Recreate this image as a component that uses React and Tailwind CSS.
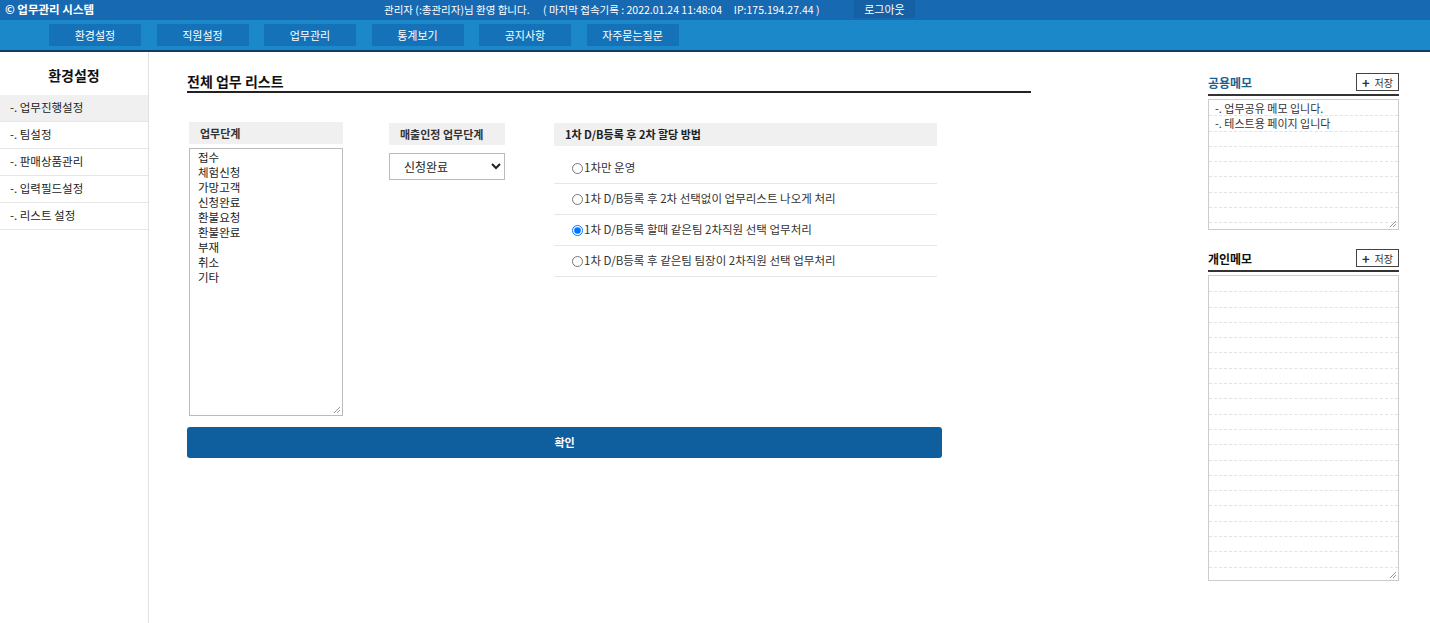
import React, { useState } from 'react';

const menus = ['환경설정', '직원설정', '업무관리', '통계보기', '공지사항', '자주묻는질문'];
const sideItems = ['-. 업무진행설정', '-. 팀설정', '-. 판매상품관리', '-. 입력필드설정', '-. 리스트 설정'];
const steps = ['접수', '체험신청', '가망고객', '신청완료', '환불요청', '환불완료', '부재', '취소', '기타'];
const methods = [
    '1차만 운영',
    '1차 D/B등록 후 2차 선택없이 업무리스트 나오게 처리',
    '1차 D/B등록 할때 같은팀 2차직원 선택 업무처리',
    '1차 D/B등록 후 같은팀 팀장이 2차직원 선택 업무처리',
];

const Memo = ({ title, color, lines = [], rows, height, className = '' }) => (
    <div className={className}>
        <div className="flex items-end justify-between border-b-2 border-[#333] pb-[2px]">
            <span className={`text-[12px] font-bold ${color}`}>{title}</span>
            <button className="flex items-center gap-[5px] border border-[#444] px-[5px] h-[18px] text-[10px] text-[#333] mb-[1px]">
                <span className="text-[13px] font-bold leading-none">+</span>저장
            </button>
        </div>
        <div className={`relative mt-[3px] border border-[#ccc] pt-[1px] overflow-hidden ${height}`}>
            {[...Array(rows)].map((_, i) => (
                <div key={i} className="h-[15.3px] border-b border-dashed border-[#e3e3e3] pl-[6px] text-[11px] leading-[15px] text-[#333]">
                    {lines[i] || ''}
                </div>
            ))}
            <svg className="absolute right-[1px] bottom-[1px]" width="8" height="8" viewBox="0 0 8 8">
                <path d="M7 1L1 7M7 4L4 7" stroke="#999" strokeWidth="1" />
            </svg>
        </div>
    </div>
);

export default function App() {
    const [method, setMethod] = useState(2);

    return (
        <div className="min-h-[623px] bg-white font-['Noto_Sans_CJK_KR','Noto_Sans',sans-serif] text-[#222]">
            {/* top bar */}
            <div className="flex items-center h-[20px] bg-[#1769b1] text-white text-[10.5px]">
                <span className="pl-[5px] w-[384px] font-bold text-[11.5px]">© 업무관리 시스템</span>
                <span className="w-[159px]">관리자 (:총관리자)님 환영 합니다.</span>
                <span className="w-[311px]">( 마지막 접속기록 : 2022.01.24 11:48:04 &nbsp;&nbsp;&nbsp; IP:175.194.27.44 )</span>
                <span className="flex items-center justify-center w-[61px] h-[18px] self-start bg-[#1660a6] text-[11px]">로그아웃</span>
            </div>
            {/* nav */}
            <div className="flex items-center gap-[15.5px] h-[32px] pl-[49px] bg-[#1b89c9] border-b-2 border-[#0f3d60]">
                {menus.map((m) => (
                    <div key={m} className="flex items-center justify-center w-[92px] h-[22px] bg-[#1572b8] text-white text-[11px]">
                        {m}
                    </div>
                ))}
            </div>

            <div className="flex">
                {/* sidebar */}
                <aside className="w-[149px] min-h-[571px] border-r border-[#e2e2e2]">
                    <div className="h-[43px] flex items-center justify-center pt-[3px] text-[14px] font-bold text-[#111]">환경설정</div>
                    {sideItems.map((s, i) => (
                        <div key={s} className={`h-[27px] flex items-center pl-[10px] text-[11.5px] border-b border-[#e6e6e6] ${i === 0 ? 'bg-[#f0f0f0]' : ''}`}>
                            {s}
                        </div>
                    ))}
                </aside>

                {/* main */}
                <main className="flex-1 pl-[38px] pt-[19px]">
                    <div className="w-[844px] border-b-2 border-[#222] text-[14px] leading-[20px] font-bold text-[#111]">전체 업무 리스트</div>

                    <div className="flex mt-[29px] pl-[2px]">
                        <div className="w-[154px]">
                            <div className="h-[22px] flex items-center pl-[11px] bg-[#f0f0f0] text-[11px] font-bold text-[#333]">업무단계</div>
                            <div className="relative mt-[4px] h-[268px] border border-[#bbb] pl-[8px] pt-[1px]">
                                {steps.map((s) => (
                                    <div key={s} className="text-[11.5px] leading-[15px] text-[#222]">{s}</div>
                                ))}
                                <svg className="absolute right-[1px] bottom-[1px]" width="8" height="8" viewBox="0 0 8 8">
                                    <path d="M7 1L1 7M7 4L4 7" stroke="#999" strokeWidth="1" />
                                </svg>
                            </div>
                        </div>

                        <div className="w-[116px] ml-[46px] mt-[1px]">
                            <div className="h-[22px] flex items-center pl-[11px] bg-[#f0f0f0] text-[11px] font-bold text-[#333]">매출인정 업무단계</div>
                            <select defaultValue="신청완료" className="mt-[8px] w-[116px] h-[27px] border border-[#bbb] pl-[10px] text-[12px] text-[#222] bg-white">
                                {steps.map((s) => <option key={s}>{s}</option>)}
                            </select>
                        </div>

                        <div className="w-[383px] ml-[49px] mt-[1px]">
                            <div className="h-[23px] flex items-center pl-[11px] bg-[#f0f0f0] text-[11px] font-bold text-[#222]">1차 D/B등록 후 2차 할당 방법</div>
                            <div className="mt-[7px]">
                                {methods.map((m, i) => (
                                    <label key={m} className="flex items-center h-[31px] pl-[18px] border-b border-[#e6e6e6] text-[11.5px] text-[#333]">
                                        <input
                                            type="radio"
                                            name="method"
                                            checked={method === i}
                                            onChange={() => setMethod(i)}
                                            className="m-0 mr-[1px] w-[11px] h-[11px]"
                                        />
                                        {m}
                                    </label>
                                ))}
                            </div>
                        </div>
                    </div>

                    <button className="mt-[11px] w-[755px] h-[31px] rounded-[3px] bg-[#0f5f9e] text-white text-[11px] font-bold">확인</button>
                </main>

                {/* memos */}
                <aside className="w-[191px] mr-[31px] pt-[21px]">
                    <Memo title="공용메모" color="text-[#1e5f92]" rows={9} height="h-[131px]" lines={['-. 업무공유 메모 입니다.', '-. 테스트용 페이지 입니다']} />
                    <Memo title="개인메모" color="text-[#111]" rows={20} height="h-[306px]" className="mt-[19px]" />
                </aside>
            </div>
        </div>
    );
}
